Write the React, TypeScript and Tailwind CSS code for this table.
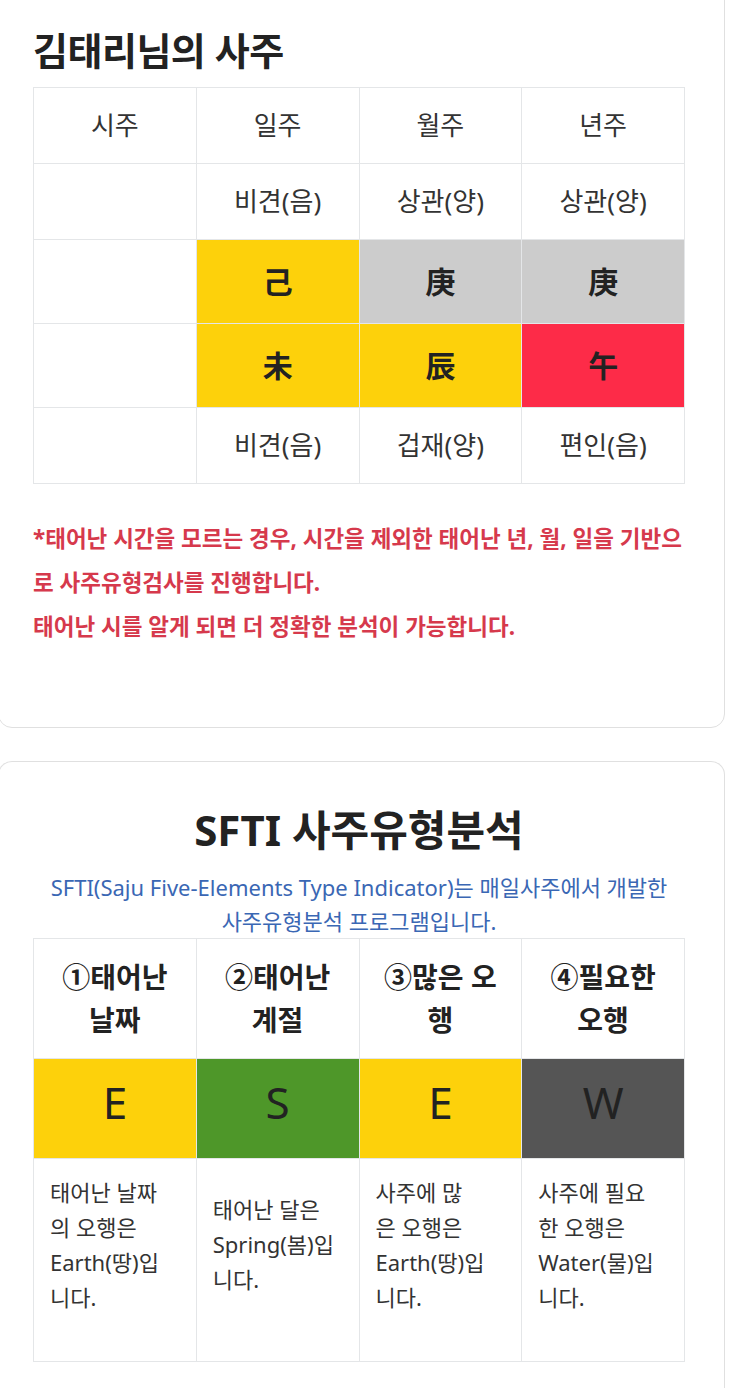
const sajuHeader = ["시주", "일주", "월주", "년주"];
const tenGodsTop = ["", "비견(음)", "상관(양)", "상관(양)"];
const tenGodsBottom = ["", "비견(음)", "겁재(양)", "편인(음)"];

const stems = [
  { char: "", bg: "bg-white" },
  { char: "己", bg: "bg-[#fdd10b]" },
  { char: "庚", bg: "bg-[#cccccc]" },
  { char: "庚", bg: "bg-[#cccccc]" },
];

const branches = [
  { char: "", bg: "bg-white" },
  { char: "未", bg: "bg-[#fdd10b]" },
  { char: "辰", bg: "bg-[#fdd10b]" },
  { char: "午", bg: "bg-[#fd2b48]" },
];

const sfti = [
  {
    title: ["①태어난", "날짜"],
    letter: "E",
    bg: "bg-[#fdd10b]",
    desc: ["태어난 날짜", "의 오행은", "Earth(땅)입", "니다."],
  },
  {
    title: ["②태어난", "계절"],
    letter: "S",
    bg: "bg-[#4e9729]",
    desc: ["태어난 달은", "Spring(봄)입", "니다."],
  },
  {
    title: ["③많은 오", "행"],
    letter: "E",
    bg: "bg-[#fdd10b]",
    desc: ["사주에 많", "은 오행은", "Earth(땅)입", "니다."],
  },
  {
    title: ["④필요한", "오행"],
    letter: "W",
    bg: "bg-[#555555]",
    desc: ["사주에 필요", "한 오행은", "Water(물)입", "니다."],
  },
];

function TextRow({ items }: { items: string[] }) {
  return (
    <div className="grid grid-cols-4">
      {items.map((t, i) => (
        <div
          key={i}
          className="h-[76px] flex items-center justify-center border-r border-b border-[#e4e6e8] text-[26px] text-[#333]"
        >
          {t}
        </div>
      ))}
    </div>
  );
}

function HanjaRow({ items }: { items: { char: string; bg: string }[] }) {
  return (
    <div className="grid grid-cols-4">
      {items.map((c, i) => (
        <div
          key={i}
          className={`h-[84px] flex items-center justify-center border-r border-b border-[#e4e6e8] text-[30px] font-bold text-[#222] ${c.bg}`}
        >
          {c.char}
        </div>
      ))}
    </div>
  );
}

export default function App() {
  return (
    <div className="min-h-[1388px] bg-white font-['Noto_Sans','Noto_Sans_CJK_KR',sans-serif] overflow-hidden">
      {/* my saju card */}
      <div className="-ml-[2px] -mt-[20px] w-[727px] border border-[#e0e0e0] rounded-[14px] pt-[47px] pl-[34px] pb-[78px]">
        <h1 className="h-[44px] leading-[44px] text-[38px] font-bold text-[#222] tracking-[-0.5px]">
          김태리님의 사주
        </h1>
        <div className="mt-[15px] w-[652px] border-l border-t border-[#e4e6e8]">
          <TextRow items={sajuHeader} />
          <TextRow items={tenGodsTop} />
          <HanjaRow items={stems} />
          <HanjaRow items={branches} />
          <TextRow items={tenGodsBottom} />
        </div>
        <div className="mt-[33px] text-[22.5px] leading-[44px] font-bold text-[#d6394c] whitespace-nowrap">
          <p>*태어난 시간을 모르는 경우, 시간을 제외한 태어난 년, 월, 일을 기반으</p>
          <p>로 사주유형검사를 진행합니다.</p>
          <p>태어난 시를 알게 되면 더 정확한 분석이 가능합니다.</p>
        </div>
      </div>

      {/* SFTI card */}
      <div className="-ml-[2px] mt-[33px] w-[727px] h-[627px] border border-b-0 border-[#e0e0e0] rounded-t-[14px] pl-[34px] pt-[40px]">
        <h2 className="w-[652px] h-[56px] leading-[56px] text-center text-[42px] font-bold text-[#222]">
          SFTI 사주유형분석
        </h2>
        <div className="mt-[12px] w-[652px] text-center text-[22px] leading-[34px] text-[#3a67b4] whitespace-nowrap">
          <p>SFTI(Saju Five-Elements Type Indicator)는 매일사주에서 개발한</p>
          <p>사주유형분석 프로그램입니다.</p>
        </div>
        <div className="w-[652px] border-l border-t border-[#e4e6e8]">
          <div className="grid grid-cols-4">
            {sfti.map((s, i) => (
              <div
                key={i}
                className="h-[120px] flex flex-col items-center justify-center border-r border-b border-[#e4e6e8] text-[28px] leading-[43px] font-bold text-[#222] whitespace-nowrap"
              >
                {s.title.map((l, j) => (
                  <span key={j}>{l}</span>
                ))}
              </div>
            ))}
          </div>
          <div className="grid grid-cols-4">
            {sfti.map((s, i) => (
              <div
                key={i}
                className={`h-[100px] pb-[14px] flex items-center justify-center border-r border-b border-[#e4e6e8] text-[44px] text-[#222] ${s.bg}`}
              >
                {s.letter}
              </div>
            ))}
          </div>
          <div className="grid grid-cols-4">
            {sfti.map((s, i) => (
              <div
                key={i}
                className="h-[203px] pt-[16px] pb-[47px] pl-[16px] flex flex-col justify-center border-r border-b border-[#e4e6e8] text-[22px] leading-[35px] text-[#333] whitespace-nowrap"
              >
                {s.desc.map((l, j) => (
                  <span key={j}>{l}</span>
                ))}
              </div>
            ))}
          </div>
        </div>
      </div>
      <div className="h-px w-full bg-[#dcdcdc]" />
    </div>
  );
}
